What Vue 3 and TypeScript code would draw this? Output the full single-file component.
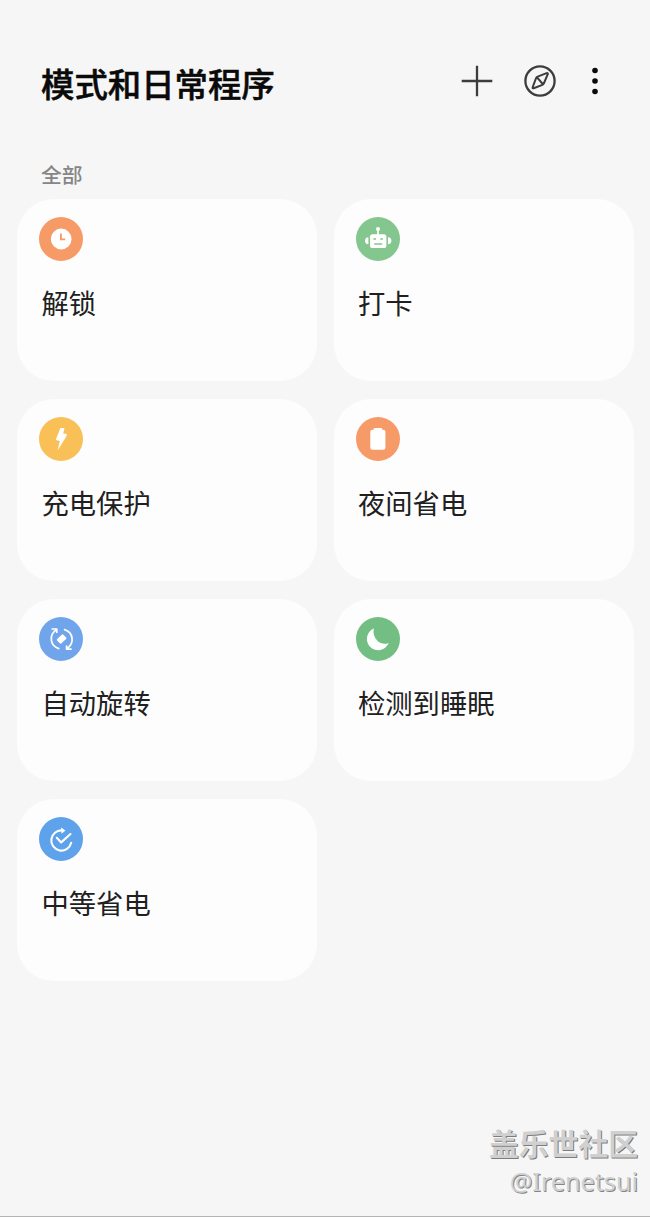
<script setup lang="ts">
type IconName = 'clock' | 'robot' | 'bolt' | 'battery' | 'rotate' | 'moon' | 'check'

interface Routine {
  name: string
  icon: IconName
  tone: string
}

const routines: Routine[] = [
  { name: '解锁', icon: 'clock', tone: 'orange' },
  { name: '打卡', icon: 'robot', tone: 'mint' },
  { name: '充电保护', icon: 'bolt', tone: 'yellow' },
  { name: '夜间省电', icon: 'battery', tone: 'orange' },
  { name: '自动旋转', icon: 'rotate', tone: 'blue' },
  { name: '检测到睡眠', icon: 'moon', tone: 'green' },
  { name: '中等省电', icon: 'check', tone: 'azure' },
]
</script>

<template>
  <main class="screen">
    <header class="header">
      <h1 class="title">模式和日常程序</h1>
      <div class="actions">
        <svg class="action" viewBox="0 0 34 34">
          <path d="M17 1.7V32.3M1.7 17H32.3" class="line" />
        </svg>
        <svg class="action compass" viewBox="0 0 34 34">
          <circle cx="17" cy="17" r="14.6" class="line" />
          <path d="M23.6 9.1L14.6 12.6Q13.5 13 13.1 14L9.7 23.2Q9.3 24.7 10.7 24.2L19.4 20.9Q20.4 20.5 20.8 19.5L24.8 10.2Q25.1 8.7 23.6 9.1ZM13.8 13.2L20.2 20.5" class="line needle" />
        </svg>
        <svg class="action more" viewBox="0 0 34 34">
          <circle cx="17" cy="6.5" r="2.8" />
          <circle cx="17" cy="17" r="2.8" />
          <circle cx="17" cy="27.5" r="2.8" />
        </svg>
      </div>
    </header>

    <h2 class="section">全部</h2>

    <section class="grid">
      <article v-for="r in routines" :key="r.name" class="card">
        <svg class="icon" :class="r.tone" viewBox="0 0 44 44">
          <circle cx="22" cy="22" r="22" class="disc" />
          <g v-if="r.icon === 'clock'">
            <circle cx="22.2" cy="22" r="10.4" class="fill" />
            <path d="M21.9 16.4V22.4H26.2" class="cut" />
          </g>
          <g v-else-if="r.icon === 'robot'">
            <circle cx="22" cy="12" r="2" class="fill" />
            <path d="M22 12V18" class="stroke" />
            <rect x="14" y="17.2" width="16.4" height="13.8" rx="2.6" class="fill" />
            <path d="M12.4 20.3V27.2Q9 26.8 9 23.7T12.4 20.3ZM32 20.3V27.2Q35.4 26.8 35.4 23.7T32 20.3Z" class="fill" />
            <path d="M17.4 22H20M24.3 22H26.9M18.2 27H26.2" class="cut thin" />
          </g>
          <path v-else-if="r.icon === 'bolt'" class="fill" d="M21.4 11H25.5L24.2 16.4L27.9 17.1L27.3 19.5L18.6 33.4L20.8 24L16.7 22.9Z" />
          <path v-else-if="r.icon === 'battery'" class="fill" d="M17.6 12.8V12Q17.6 11 18.6 11H25.2Q26.2 11 26.2 12V12.8H27.4Q29.4 12.8 29.4 14.8V30.8Q29.4 32.8 27.4 32.8H16.3Q14.3 32.8 14.3 30.8V14.8Q14.3 12.8 16.3 12.8Z" />
          <g v-else-if="r.icon === 'rotate'">
            <path class="stroke round" d="M19.8 31.6C11.4 28.8 9.3 18.7 17.2 12.8M25.6 12.6C34 15.4 36.1 25.4 28.2 31.4M13.2 12H17.8V15.2M32 32.2H27.6V29" />
            <rect x="18.3" y="19" width="8.6" height="6" rx="1" class="fill" transform="rotate(-42 22.6 22)" />
          </g>
          <path v-else-if="r.icon === 'moon'" class="fill" d="M17.9 11.4A11.3 11.3 0 1 0 32.7 26Q26.2 28.4 21.6 24Q16.2 18.4 17.9 11.4Z" />
          <g v-else>
            <path class="stroke bold" d="M32.2 25.8A10.1 10.1 0 1 1 23 13.4M17.8 20.8L22.2 25.4L31.5 17" />
            <path class="fill" d="M22 10.4L26.4 13.4L22.6 16.8Z" />
          </g>
        </svg>
        <span class="name">{{ r.name }}</span>
      </article>
    </section>

    <footer class="watermark">
      <span class="community">盖乐世社区</span>
      <span class="author">@Irenetsui</span>
    </footer>
  </main>
</template>

<style>
body {
  margin: 0;
  background: #f6f6f6;
}
</style>

<style scoped>
.screen {
  box-sizing: border-box;
  display: flex;
  flex-direction: column;
  height: 1217px;
  background: #f6f6f6;
  border-bottom: 1px solid #b4b4b4;
  font-family: "Noto Sans CJK SC", "Noto Sans", sans-serif;
}

.header {
  display: flex;
  justify-content: space-between;
  align-items: flex-start;
  padding: 59px 38px 0 41px;
}

.title {
  margin: 0;
  font-size: 33.4px;
  line-height: 48px;
  font-weight: 500;
  -webkit-text-stroke: 0.5px #0a0a0a;
  color: #0a0a0a;
}

.actions {
  display: flex;
  margin-top: 5px;
}

.action {
  width: 34px;
  height: 34px;
}

.compass {
  margin-left: 29px;
}

.more {
  margin-left: 21px;
  fill: #0a0a0a;
}

.line {
  fill: none;
  stroke: #3c3c3c;
  stroke-width: 2.3;
  stroke-linejoin: round;
}

.needle {
  stroke-width: 2;
}

.section {
  margin: 52px 0 10px 41px;
  font-size: 20.8px;
  line-height: 30px;
  font-weight: 500;
  color: #868686;
}

.grid {
  display: grid;
  grid-template-columns: 300px 300px;
  grid-auto-rows: 182px;
  gap: 18px 16.5px;
  padding-left: 17px;
}

.card {
  box-sizing: border-box;
  display: flex;
  flex-direction: column;
  padding: 18px 22px;
  border-radius: 37px;
  background: #fdfdfd;
}

.icon {
  width: 44px;
  height: 44px;
}

.name {
  margin: 21px 0 0 2.5px;
  font-size: 27.3px;
  line-height: 40px;
  color: #202020;
}

.orange { color: #f69a67; }
.mint { color: #83c68e; }
.yellow { color: #f8c057; }
.blue { color: #70a5ec; }
.green { color: #72be83; }
.azure { color: #5da2eb; }

.disc {
  fill: currentColor;
}

.fill {
  fill: #fff;
}

.stroke {
  fill: none;
  stroke: #fff;
  stroke-width: 1.7;
}

.round {
  stroke-linecap: round;
  stroke-linejoin: round;
}

.bold {
  stroke-width: 2.1;
  stroke-linecap: round;
  stroke-linejoin: round;
}

.cut {
  fill: none;
  stroke: currentColor;
  stroke-width: 1.8;
}

.thin {
  stroke-width: 1.4;
}

.watermark {
  display: flex;
  flex-direction: column;
  align-items: flex-end;
  margin-top: auto;
  padding: 0 12px 15px 0;
  color: #d0d0d0;
}

.community {
  font-size: 29.8px;
  line-height: 40px;
  font-weight: 700;
  text-shadow: 1px 1px 0 #7c7c7c;
}

.author {
  margin-top: -1px;
  font-family: "Noto Sans", sans-serif;
  font-size: 25.2px;
  line-height: 40px;
  text-shadow: 1px 1px 0 #858585;
}
</style>
